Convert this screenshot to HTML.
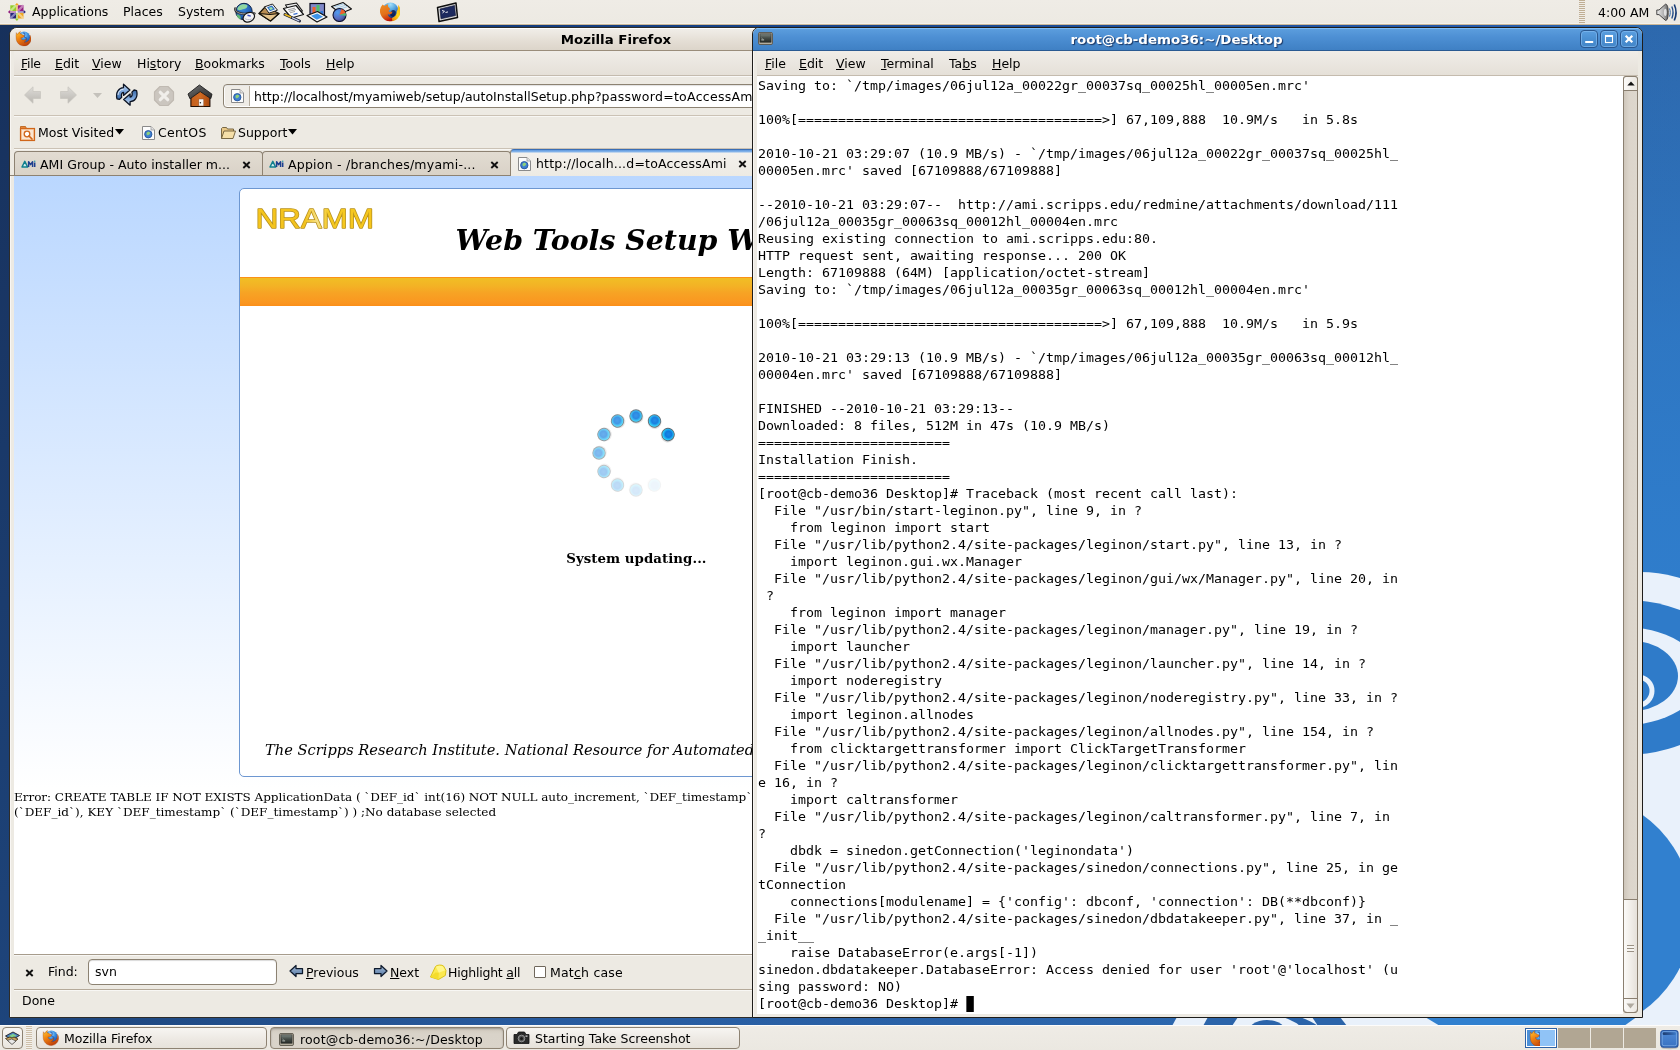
<!DOCTYPE html>
<html lang="en">
<head>
<meta charset="utf-8">
<title>Desktop</title>
<style>
html,body{margin:0;padding:0;}
body{width:1680px;height:1050px;overflow:hidden;position:relative;background:#1b3c70;font-family:"DejaVu Sans","Liberation Sans",sans-serif;font-size:12.5px;color:#000;}
.abs{position:absolute;}
u{text-decoration:underline;text-underline-offset:0.5px;text-decoration-thickness:1px;}
#wall{left:0;top:0;width:1680px;height:1050px;}
/* panels */
#toppanel{left:0;top:0;width:1680px;height:24px;background:linear-gradient(#efece6 0,#edeae3 22px,#edeae3 23px,#f4f1ec 23px,#f4f1ec 24px);border-bottom:1px solid #cbb898;}
#botpanel{left:0;top:1025px;width:1680px;height:25px;background:linear-gradient(#efece6,#ebe8e1);}
.ptxt{position:absolute;top:5px;white-space:nowrap;line-height:15px;}
/* windows */
.win{position:absolute;box-sizing:border-box;background:#edeae3;}
.menubar{position:absolute;left:0;right:0;white-space:nowrap;}
.menubar span{position:absolute;top:0;line-height:15px;}
/* terminal */
#termtext{position:absolute;left:758px;top:77px;margin:0;font-family:"DejaVu Sans Mono","Liberation Mono",monospace;font-size:12.5px;line-height:17px;white-space:pre;color:#000;transform:scaleX(1.06304);transform-origin:0 0;}
</style>
<style>
.tab{box-sizing:border-box;border:1px solid #8d8272;border-bottom:none;border-radius:4px 4px 0 0;background:linear-gradient(#e2dcd2,#d9d2c7);}
.tabt{line-height:16px;white-space:nowrap;}
.tabx{font-weight:bold;font-size:13px;line-height:16px;}
</style>
<style>
.tbtn{width:18px;height:18px;box-sizing:border-box;border:1px solid #2a578f;border-radius:4px;background:linear-gradient(#5b9fe0,#4a8fd2 50%,#4486c8);box-shadow:inset 0 0 0 1px rgba(140,195,245,.55);}
.tbtn svg{position:absolute;left:-1px;top:-1px;}
</style>
<style>
.task{top:2px;width:232px;height:22px;box-sizing:border-box;border:1px solid #8d8272;border-radius:4px;background:linear-gradient(#f7f5f2,#ece8e2 60%,#e6e2da);}
</style>
<style>
.ptxt,.menubar span,.tabt,.ut{font-size:12px;transform:scaleX(1.0417);transform-origin:0 50%;}
</style>
</head>
<body>
<div id="root" style="position:absolute;left:0;top:0;width:1680px;height:1050px;overflow:hidden;will-change:transform;">
<svg id="wall" class="abs" width="1680" height="1050" viewBox="0 0 1680 1050">
<defs>
<linearGradient id="wg" x1="0" y1="0" x2="1" y2="0">
<stop offset="0" stop-color="#17315c"/><stop offset="0.45" stop-color="#1f4d8d"/><stop offset="0.8" stop-color="#2a65aa"/><stop offset="1" stop-color="#2d69ae"/>
</linearGradient>
<linearGradient id="wv" x1="0" y1="0" x2="0" y2="1">
<stop offset="0.03" stop-color="#2f7dcc" stop-opacity="0"/><stop offset="0.18" stop-color="#2f7dcc" stop-opacity="0.3"/><stop offset="0.32" stop-color="#2f7dcc" stop-opacity="0.7"/><stop offset="0.5" stop-color="#2f7dcc" stop-opacity="0.95"/><stop offset="1" stop-color="#3383d3" stop-opacity="1"/>
</linearGradient>
<linearGradient id="wl" x1="0" y1="0" x2="0" y2="1">
<stop offset="0" stop-color="#17305b"/><stop offset="1" stop-color="#1e457c"/>
</linearGradient>
<linearGradient id="wt" x1="0" y1="0" x2="1" y2="0"><stop offset="0" stop-color="#16315d"/><stop offset="0.286" stop-color="#133b7b"/><stop offset="0.65" stop-color="#1c4c95"/><stop offset="0.893" stop-color="#2458a8"/><stop offset="1" stop-color="#2d69ae"/></linearGradient>
<linearGradient id="wb" x1="0" y1="0" x2="1" y2="0"><stop offset="0" stop-color="#1d447a"/><stop offset="0.357" stop-color="#275a9e"/><stop offset="0.673" stop-color="#2a62a8"/><stop offset="1" stop-color="#2e6cb4"/></linearGradient>
</defs>
<rect width="1680" height="1050" fill="url(#wg)"/>
<rect x="1400" width="280" height="1050" fill="url(#wv)"/>
<rect x="0" width="12" height="1050" fill="url(#wl)"/>
<rect x="12" y="20" width="1630" height="10" fill="url(#wt)"/>
<rect x="12" y="1012" width="1400" height="16" fill="url(#wb)"/>
<!-- swirl -->
<ellipse cx="1640" cy="830" rx="186" ry="258" fill="#e9f1fb"/>
<ellipse cx="1625" cy="677.5" rx="112" ry="77.5" fill="#2f7bc9"/>
<ellipse cx="1620" cy="676" rx="82.6" ry="49.5" fill="#e9f1fb"/>
<ellipse cx="1630" cy="676" rx="48" ry="35.5" fill="#2f7bc9"/>
<circle cx="1638" cy="691" r="14" fill="none" stroke="#e9f1fb" stroke-width="5"/>
<ellipse cx="1578" cy="913" rx="114.7" ry="118.9" fill="#3180cf"/>
<path d="M1422 1016L1638 1016L1624 1026L1435 1026z" fill="#3180cf"/>
<!-- bottom strip swirls -->
<g>
<path d="M1177 1017 L1172 1026 L1440 1026 L1425 1017 Z" fill="#e9f1fb"/>
<path d="M1208 1017 L1203 1026 L1232 1026 L1238 1017 Z" fill="#2b64aa"/>
<ellipse cx="1267" cy="1034" rx="20" ry="14" fill="#2b64aa"/>
<path d="M1283 1017 L1300 1017 C1308 1020 1314 1023 1318 1026 L1300 1026 C1296 1022 1290 1020 1283 1017 Z" fill="#2b64aa"/>
<path d="M1312 1017 L1340 1017 L1347 1026 L1318 1026 Z" fill="#2b64aa"/>
</g>
</svg>
<svg width="0" height="0" style="position:absolute">
<defs>
<radialGradient id="ffglobe" cx="0.5" cy="0.12" r="0.95"><stop offset="0" stop-color="#a4e0fa"/><stop offset="0.35" stop-color="#5aa8e0"/><stop offset="0.65" stop-color="#2f66b8"/><stop offset="1" stop-color="#071a55"/></radialGradient>
<linearGradient id="fffox" x1="0.3" y1="0" x2="0.6" y2="1"><stop offset="0" stop-color="#ee8a22"/><stop offset="0.55" stop-color="#e2701a"/><stop offset="0.85" stop-color="#cf3a0e"/><stop offset="1" stop-color="#b81408"/></linearGradient>
<linearGradient id="fftail" x1="0" y1="1" x2="1" y2="0.2"><stop offset="0" stop-color="#dc5a0c"/><stop offset="0.35" stop-color="#f0a010"/><stop offset="0.65" stop-color="#ffd81c"/><stop offset="1" stop-color="#f6b414"/></linearGradient>
<symbol id="firefox" viewBox="0 0 20 20">
<circle cx="10.2" cy="9.2" r="7.7" fill="url(#ffglobe)"/>
<ellipse cx="12.6" cy="12" rx="2.6" ry="3.3" transform="rotate(25 12.6 12)" fill="#050f40" opacity="0.75"/>
<path d="M8.5 19.7A9.8 9.8 0 0 0 17.6 3.6C18 6.2 17.3 8.6 16.3 10.2 16.7 13.8 13.5 17 9.5 16.8z" fill="url(#fftail)"/>
<path d="M2.6 3.4C3.4 4.3 4.4 4.8 5.3 4.7 6 3.9 7 3.4 8 3.5 7.6 4.4 7.7 5.2 8.2 5.9L9.6 7.2C10 7.8 9.8 8.4 9.2 8.7L8.3 9.2 9.2 9.9 8.2 10.5C9.3 10.9 10.6 10.8 11.8 10.3 12.2 11 12 11.9 11.3 12.5 10.2 13.3 8.6 13.3 7.5 12.6 7.8 14.6 9.4 16.3 11.6 16.6L12 19.5A9.8 9.8 0 0 1 2.6 3.4z" fill="url(#fffox)"/>
</symbol>
<radialGradient id="ffglobe3" cx="0.45" cy="0.3" r="0.75"><stop offset="0" stop-color="#b4e2ff"/><stop offset="0.45" stop-color="#3f96e4"/><stop offset="1" stop-color="#173f9c"/></radialGradient>
<linearGradient id="fffox3" x1="0.1" y1="0" x2="0.7" y2="1"><stop offset="0" stop-color="#ffc42e"/><stop offset="0.4" stop-color="#f08412"/><stop offset="1" stop-color="#b93a0a"/></linearGradient>
<symbol id="ffx3" viewBox="0 0 20 20">
<circle cx="11" cy="9" r="7.3" fill="url(#ffglobe3)"/>
<path d="M9.5 3.5c1.5 0 2.5 1 2.5 2.2s-1 1.8-.5 2.8 2 .5 2.5 1.5-.5 2.5-2 2.5" fill="none" stroke="#2359b5" stroke-width="1.3" opacity="0.8"/>
<path d="M1.6 3.2c.4 1 .9 1.6 1.7 2C3.8 3.7 5 2.5 6.6 1.9 6 2.9 5.9 3.8 6.2 4.7c1.2-.1 2.3.5 3 1.5l1.7.3c.5.3.5.9.2 1.3L9.7 9.1C9 9.6 8 9.7 7.2 9.3c0 1.2.8 2.3 2 2.7 1.7.6 3.5-.1 4.5-1.6.1 2-1 3.7-2.7 4.5 2.7.3 5.2-1.1 6.5-3.4.9-1.6 1.1-3.5.6-5.2 1.1 1.5 1.6 3.4 1.4 5.3-.5 4.5-4.4 7.9-8.9 7.8-4.7-.1-8.6-3.7-9.1-8.4-.3-2.7-.3-5.2.100-7.8z" fill="url(#fffox3)" stroke="#9c3606" stroke-width="0.4" stroke-linejoin="round"/>
</symbol>
<linearGradient id="termscr" x1="0" y1="0" x2="0" y2="1"><stop offset="0" stop-color="#7c8680"/><stop offset="0.5" stop-color="#454c47"/><stop offset="1" stop-color="#262b28"/></linearGradient>
<symbol id="termicon" viewBox="0 0 16 14">
<rect x="0.5" y="0.5" width="15" height="13" rx="1.5" fill="#b4ae9f" stroke="#5a554b"/>
<rect x="2" y="2" width="12" height="9" fill="url(#termscr)" stroke="#2a2a26" stroke-width="0.6"/>
<path d="M3.5 8.5h3" stroke="#d8ddd8" stroke-width="0.9"/>
<path d="M3.5 6.3l1.6 1" stroke="#aab0aa" stroke-width="0.6" fill="none"/>
</symbol>
</defs>
</svg>

<div id="toppanel" class="abs">
<!-- CentOS logo -->
<svg class="abs" style="left:7px;top:2px" width="20" height="20" viewBox="0 0 20 20">
<g transform="translate(9.9 9.9)">
<rect x="-6.6" y="-6.6" width="5.8" height="5.8" fill="#92cc2a"/><rect x="0.8" y="-6.6" width="5.8" height="5.8" fill="#931f80"/><rect x="0.8" y="0.8" width="5.8" height="5.8" fill="#efa520"/><rect x="-6.6" y="0.8" width="5.8" height="5.8" fill="#26247a"/>
<path d="M-6.6 -0.8L-0.8 -6.6" stroke="#d2ee9c" stroke-width="2.2" opacity="0.8"/><path d="M0.8 -0.8L6.6 -6.6" stroke="#cf90c4" stroke-width="2.2" opacity="0.85"/><path d="M0.8 0.8L6.6 6.6" stroke="#f8d898" stroke-width="2.2" opacity="0.85"/><path d="M-6.6 6.6L-0.8 0.8" stroke="#9a98c8" stroke-width="2.2" opacity="0.85"/>
<path d="M0 -7V0" stroke="#f3bf5e" stroke-width="1.3"/><path d="M7 0H0" stroke="#8a7cc0" stroke-width="1.3"/><path d="M0 7V0" stroke="#b4dc6a" stroke-width="1.3"/><path d="M-7 0H0" stroke="#c47ab8" stroke-width="1.3"/>
<path d="M-1.9 -6.8L0 -9 1.9 -6.8z" fill="#efa520"/><path d="M6.8 -1.9L9 0 6.8 1.9z" fill="#26247a"/><path d="M-1.9 6.8L0 9 1.9 6.8z" fill="#92cc2a"/><path d="M-6.8 -1.9L-9 0 -6.8 1.9z" fill="#931f80"/>
<circle r="1" fill="#fff" opacity="0.9"/>
</g>
</svg>
<span class="ptxt" style="left:32px">Applications</span>
<span class="ptxt" style="left:122.5px">Places</span>
<span class="ptxt" style="left:178px">System</span>
<!-- launcher: web browser globe + mouse -->
<svg class="abs" style="left:234px;top:2px" width="22" height="21" viewBox="0 0 22 21">
<defs><radialGradient id="glb" cx="0.4" cy="0.3" r="0.8"><stop offset="0" stop-color="#3f8fe0"/><stop offset="1" stop-color="#0f3f96"/></radialGradient></defs>
<circle cx="10" cy="9.5" r="8.2" fill="url(#glb)" stroke="#0a1f45" stroke-width="1"/>
<path d="M5 4.2c2-2 5.5-2.5 8-1.2 1.2 1.5-.5 3.5-3 4S6.5 8.5 4.5 8 3.5 5.5 5 4.2z" fill="#8fd6a0"/>
<path d="M2.5 12.5c1.5-.3 3 .3 3.8 1.5s.5 2.8-.3 3.5C4 16.5 3 14.8 2.5 12.5z" fill="#5fb574"/>
<path d="M1.2 6.5C0.5 9.5 5 12 11 11.8s8.5-1.3 9.5-.3" fill="none" stroke="#2b2b2b" stroke-width="2.3" stroke-linecap="round"/>
<path d="M1.2 6.5C0.5 9.5 5 12 11 11.8s8.5-1.3 9.5-.3" fill="none" stroke="#a8a8a8" stroke-width="0.9" stroke-linecap="round"/>
<ellipse cx="14.8" cy="15.3" rx="6" ry="4.5" transform="rotate(-28 14.8 15.3)" fill="#f4f4f6" stroke="#161616" stroke-width="1.2"/>
<path d="M13.5 13.3l3.3 .800" stroke="#3d4fc0" stroke-width="1.4"/>
<path d="M10.5 16c1.5 1.8 4.5 2.3 7 1" fill="none" stroke="#b9b9c4" stroke-width="1"/>
</svg>
<!-- launcher: email -->
<svg class="abs" style="left:258px;top:2px" width="22" height="20" viewBox="0 0 22 20">
<path d="M1 11.5L7.5 4.5l13.5 7-8.5 7.5z" fill="#b98d52" stroke="#141008" stroke-width="1.2" stroke-linejoin="round"/>
<path d="M1 11.5l11 1L21 11.5l-8.5 7.5z" fill="#e6c48c" stroke="#141008" stroke-width="1.1" stroke-linejoin="round"/>
<path d="M6.5 4.8L14.5 2l5 6.2-8.5 3z" fill="#f6f6f2" stroke="#222" stroke-width="1"/>
<path d="M9 5.3l5-1.7 3 3.7-5 1.9z" fill="#2f6fc8"/>
<path d="M10.8 5.8l2.7-.9 1.6 2-2.7 1z" fill="#9fe0a8"/>
</svg>
<!-- launcher: word processor -->
<svg class="abs" style="left:282px;top:2px" width="23" height="21" viewBox="0 0 23 21">
<path d="M3.5 3l11-2 6 8-11 3z" fill="#ececec" stroke="#141414" stroke-width="1.1" stroke-linejoin="round"/>
<path d="M1.5 6.5l12.5-3 7.5 9-12 3.5z" fill="#fcfcfc" stroke="#141414" stroke-width="1.2" stroke-linejoin="round"/>
<path d="M6 7.8l7-1.7M7 9.3l7-1.8M8 10.8l5-1.4" stroke="#9a9a9a" stroke-width="0.9"/>
<path d="M11.5 12.3l4-1" stroke="#3a6fd0" stroke-width="1.3"/>
<path d="M3 12.5l14.5 6.5" stroke="#141a30" stroke-width="3" stroke-linecap="round"/>
<path d="M3.2 12.5l5.5 2.5" stroke="#e8b820" stroke-width="1.7" stroke-linecap="round"/>
<path d="M10.5 15.8l6.5 3" stroke="#c4cdea" stroke-width="1.3" stroke-linecap="round"/>
</svg>
<!-- launcher: presentation -->
<svg class="abs" style="left:306px;top:2px" width="22" height="21" viewBox="0 0 22 21">
<rect x="4" y="1.5" width="14.5" height="12" fill="#8088c8" stroke="#0c0c20" stroke-width="1.2"/>
<rect x="6.5" y="5" width="3" height="6" fill="#f0622a"/><rect x="10.5" y="3" width="3" height="8" fill="#4fbe6a"/><rect x="14.5" y="9" width="2.5" height="4" fill="#2f7ad8"/>
<path d="M1 13.5l10.5-4 9.5 5.5-10 5z" fill="#f6f6f6" stroke="#111" stroke-width="1.2" stroke-linejoin="round"/>
<path d="M5 13.8l6.3-2.4 5.7 3.3-6.2 3z" fill="#3d94ea"/>
</svg>
<!-- launcher: spreadsheet -->
<svg class="abs" style="left:330px;top:1px" width="23" height="21" viewBox="0 0 23 21">
<defs><radialGradient id="pieg" cx="0.35" cy="0.3" r="0.8"><stop offset="0" stop-color="#4f9cf0"/><stop offset="0.6" stop-color="#5a6cc0"/><stop offset="1" stop-color="#3a3f80"/></radialGradient></defs>
<path d="M1.5 5.5L13 1.5l8.5 6.5-11 4.5z" fill="#ececec" stroke="#111" stroke-width="1.1" stroke-linejoin="round"/>
<path d="M4.5 5.8l9-3M6.5 7.3l9-3.1M8.5 8.8l9-3.3" stroke="#8fc4e8" stroke-width="0.8"/>
<circle cx="9.5" cy="14" r="6.5" fill="url(#pieg)" stroke="#0e1230" stroke-width="1.1"/>
<path d="M9.5 14L11.5 7.9a6.5 6.5 0 0 1 4.2 4z" fill="#f0602a"/>
<path d="M9.5 14l6.2-2.1a6.5 6.5 0 0 1 .2 2.8z" fill="#4fbe6a"/>
</svg>
<!-- firefox launcher -->
<svg class="abs" style="left:379.5px;top:1.3px" width="20.5" height="20.5"><use href="#firefox" width="20.5" height="20.5"/></svg>
<!-- terminal launcher -->
<svg class="abs" style="left:436px;top:1px" width="23" height="22" viewBox="0 0 23 22">
<path d="M1.5 6.5L20 2l1.5 14.5-18.5 4z" fill="#dcdcdc" stroke="#0e0e0e" stroke-width="1.5" stroke-linejoin="round"/>
<path d="M4 8L18.5 4.5l1 10-14.5 3.3z" fill="#1d2a5e" stroke="#0c1030" stroke-width="0.6"/>
<path d="M6 9.5l2.5.8-2 1.7" fill="none" stroke="#fff" stroke-width="0.9"/><path d="M9.5 11.5l2.5-.6" stroke="#fff" stroke-width="0.9"/>
</svg>
<!-- handle -->
<div class="abs" style="left:1579px;top:0;width:6px;height:24px;background:repeating-linear-gradient(#bfae94 0,#bfae94 1px,#f0ede7 1px,#f0ede7 2px);"></div>
<span class="ptxt" style="left:1598px;top:6px">4:00 AM</span>
<!-- speaker -->
<svg class="abs" style="left:1656px;top:3px" width="23" height="19" viewBox="0 0 23 19">
<defs><linearGradient id="spk" x1="0" y1="0" x2="1" y2="0"><stop offset="0" stop-color="#f0f0f0"/><stop offset="0.6" stop-color="#b0b0b0"/><stop offset="1" stop-color="#5a5a5a"/></linearGradient></defs>
<path d="M0.8 7H3L9.5 1.2C11.5 1 12.2 5 12.2 9.3 12.2 13.6 11.5 17.6 9.5 17.4L3 11.6H0.8z" fill="url(#spk)" stroke="#333" stroke-width="0.9" stroke-linejoin="round"/>
<ellipse cx="9.3" cy="9.3" rx="1.4" ry="3.6" fill="#ededed" opacity="0.85"/>
<path d="M13.5 5.5c1 2.5 1 5.5 0 8" fill="none" stroke="#3465a4" stroke-width="1"/>
<path d="M15.8 3.5c1.6 3.8 1.6 8.2 0 12" fill="none" stroke="#204a87" stroke-width="1.3"/>
<path d="M18.3 1.5c2.2 5 2.2 11 0 16" fill="none" stroke="#173a74" stroke-width="1.6"/>
</svg>
</div>

<div id="ff" class="abs" style="left:9px;top:27px;width:1216px;height:991px;box-sizing:border-box;border:1px solid #2e2c28;border-radius:8px 8px 0 0;background:#edeae3;overflow:hidden;"></div>
<!-- title bar -->
<div class="abs" style="left:10px;top:28px;width:1214px;height:22px;border-radius:7px 7px 0 0;background:linear-gradient(#f1eee9 0,#ece8e1 25%,#e5dfd6 55%,#e0d9cf 80%,#dcd5ca 100%);border-bottom:1px solid #9a8d7b;"></div>
<div class="abs" style="left:16px;top:28px;width:1202px;height:1px;background:#fff;"></div>
<svg class="abs" style="left:14.5px;top:30.3px" width="16.5" height="16.5"><use href="#ffx3" width="16.5" height="16.5"/></svg>
<div class="abs" style="left:10px;top:31.5px;width:1212px;text-align:center;font-weight:bold;font-size:12px;line-height:16px;color:#000;transform:scaleX(1.111);">Mozilla Firefox</div>
<!-- menubar -->
<div class="abs" style="left:10px;top:51px;width:1px;height:966px;background:#f8f6f3;"></div><div class="abs" style="left:14px;top:51px;width:1210px;height:24px;background:linear-gradient(#f0ede8,#e5e0d8);border-bottom:1px solid #c4bbae;"></div>
<div class="abs" style="left:14px;top:76px;width:1210px;height:1px;background:#f9f8f6;"></div>
<div class="menubar" style="top:57px;left:0;height:15px">
<span style="left:21px;letter-spacing:-0.3px"><u>F</u>ile</span><span style="left:55px"><u>E</u>dit</span><span style="left:92px"><u>V</u>iew</span><span style="left:137px">Hi<u>s</u>tory</span><span style="left:195px"><u>B</u>ookmarks</span><span style="left:280px"><u>T</u>ools</span><span style="left:326px"><u>H</u>elp</span>
</div>
<!-- nav toolbar -->
<div class="abs" style="left:14px;top:115px;width:1210px;height:1px;background:#cbc2b5;"></div>
<div class="abs" style="left:14px;top:116px;width:1210px;height:1px;background:#f8f7f4;"></div>
<!-- back -->
<svg class="abs" style="left:23px;top:85px" width="20" height="20" viewBox="0 0 20 20"><defs><linearGradient id="garr" x1="0" y1="0" x2="0" y2="1"><stop offset="0" stop-color="#dedcd8"/><stop offset="1" stop-color="#b9b6b0"/></linearGradient></defs><path d="M1.5 10L10 1.8V6.5H17.5V13.5H10V18.2z" fill="url(#garr)" stroke="#c9c6c0" stroke-width="0.8"/></svg>
<!-- forward -->
<svg class="abs" style="left:58px;top:85px" width="20" height="20" viewBox="0 0 20 20"><path d="M18.5 10L10 1.8V6.5H2.5V13.5H10V18.2z" fill="url(#garr)" stroke="#c9c6c0" stroke-width="0.8"/></svg>
<svg class="abs" style="left:92px;top:92px" width="11" height="7" viewBox="0 0 11 7"><path d="M1 1h9L5.5 6z" fill="#c4c1bb"/></svg>
<!-- reload -->
<svg class="abs" style="left:115px;top:83px" width="24" height="24" viewBox="0 0 24 24">
<defs><linearGradient id="grel" x1="0" y1="0" x2="0" y2="1"><stop offset="0" stop-color="#c9dcf4"/><stop offset="0.45" stop-color="#7fa8dc"/><stop offset="1" stop-color="#3465a4"/></linearGradient>
<path id="rarr" d="M2 15.8C0.3 9 4 4.9 8.5 4.7V1.2L14.9 7 8.5 12.4V9.3C6.6 9.5 5.9 11.6 6.7 14.3L4.5 16.4z"/></defs>
<use href="#rarr" fill="url(#grel)" stroke="#0c1424" stroke-width="1.3" stroke-linejoin="round"/>
<use href="#rarr" transform="rotate(180 11.8 11.7)" fill="url(#grel)" stroke="#0c1424" stroke-width="1.3" stroke-linejoin="round"/>
<path d="M3 12C3 8.5 5.5 6.3 8.5 6.2" fill="none" stroke="#fff" stroke-width="1" opacity="0.7"/>
</svg>
<!-- stop (disabled) -->
<svg class="abs" style="left:153px;top:85px" width="22" height="22" viewBox="0 0 22 22"><path d="M7 1.5h8L20.5 7v8L15 20.5H7L1.5 15V7z" fill="#cbc6bf" stroke="#c0bab2" stroke-width="1.2" stroke-linejoin="round"/><path d="M7.3 7.3l7.4 7.4M14.7 7.3l-7.4 7.4" stroke="#f0eeea" stroke-width="3.2" stroke-linecap="round"/></svg>
<!-- home -->
<svg class="abs" style="left:187px;top:84px" width="26" height="24" viewBox="0 0 26 24">
<defs><linearGradient id="ghome" x1="0" y1="0" x2="1" y2="0"><stop offset="0" stop-color="#c4601e"/><stop offset="0.5" stop-color="#cf6a22"/><stop offset="1" stop-color="#a8480f"/></linearGradient>
<linearGradient id="groof" x1="0" y1="0" x2="1" y2="1"><stop offset="0" stop-color="#7a7a7a"/><stop offset="0.5" stop-color="#4a4a4a"/><stop offset="1" stop-color="#2e2e2e"/></linearGradient></defs>
<path d="M3.9 22.5V12L13 6l9.9 6V22.5z" fill="url(#ghome)" stroke="#1e0d03" stroke-width="1.1" stroke-linejoin="round"/>
<path d="M1 10L12.4 1 25 10.2 23.8 14.6 13.2 7.6 3 14.8z" fill="url(#groof)" stroke="#1c1c1c" stroke-width="0.9" stroke-linejoin="round"/>
<rect x="11.8" y="15" width="5" height="7" fill="#f6f6f6" stroke="#8a4a20" stroke-width="0.5"/>
<circle cx="13.4" cy="18.7" r="0.75" fill="#222"/>
</svg>
<!-- url bar -->
<div class="abs" style="left:223px;top:84px;width:900px;height:24px;box-sizing:border-box;border:1px solid #8c8272;border-radius:4px;background:#fff;box-shadow:inset 0 1px 1px rgba(0,0,0,.12);"></div>
<div class="abs" style="left:225px;top:86px;width:24px;height:20px;background:#efece6;border-right:1px solid #b5ac9e;border-radius:2px 0 0 2px"></div>
<svg class="abs pgicon" style="left:230px;top:88px" width="15" height="16" viewBox="0 0 15 16"><path d="M1.5 1.5h8.5l3.5 3.5v9.5H1.5z" fill="#fdfdfd" stroke="#8a8a8a" stroke-width="1"/><path d="M10 1.5v3.5h3.5" fill="#e4e4e4" stroke="#9a9a9a" stroke-width="0.8"/><circle cx="7.3" cy="9.2" r="3.7" fill="#3f7fd0" stroke="#1d4c96" stroke-width="0.8"/><path d="M5.5 8c1-1.5 3-1.5 3.5-.5s-.5 2-1.5 2.5-2 .5-2-2z" fill="#8ed07a"/></svg>
<div class="abs ut" style="left:254px;top:89px;line-height:16px;white-space:nowrap;letter-spacing:0.005px">http://localhost/myamiweb/setup/autoInstallSetup.php?<span style="letter-spacing:0.27px">password=toAccessAmi</span></div>
<!-- bookmarks toolbar -->
<div class="abs" style="left:14px;top:148px;width:1210px;height:1px;background:#cbc2b5;"></div>
<div class="abs" style="left:14px;top:149px;width:1210px;height:1px;background:#f8f7f4;"></div>
<svg class="abs" style="left:19px;top:125px" width="17" height="17" viewBox="0 0 17 17"><path d="M1.5 3.5V1.5h5l1 2z" fill="#e88a3c" stroke="#b85a10" stroke-width="0.8"/><rect x="1.5" y="3.5" width="14" height="12" fill="#f6c9a0" stroke="#d0661a" stroke-width="1.2"/><rect x="3" y="5" width="11" height="9" fill="#fbe6d2"/><circle cx="8" cy="9" r="2.8" fill="#fff" stroke="#d0661a" stroke-width="1.3"/><path d="M10 11l3 3" stroke="#d0661a" stroke-width="1.7" stroke-linecap="round"/></svg>
<div class="abs ut" style="left:38px;top:124.5px;line-height:16px;white-space:nowrap;">Most Visited</div>
<svg class="abs" style="left:115px;top:129px" width="9" height="6" viewBox="0 0 9 6"><path d="M0 0h9L4.5 5.5z" fill="#000"/></svg>
<svg class="abs" style="left:141px;top:125px" width="15" height="16" viewBox="0 0 15 16"><path d="M1.5 1.5h8.5l3.5 3.5v9.5H1.5z" fill="#fdfdfd" stroke="#8a8a8a" stroke-width="1"/><path d="M10 1.5v3.5h3.5" fill="#e4e4e4" stroke="#9a9a9a" stroke-width="0.8"/><circle cx="7.3" cy="9.2" r="3.7" fill="#3f7fd0" stroke="#1d4c96" stroke-width="0.8"/><path d="M5.5 8c1-1.5 3-1.5 3.5-.5s-.5 2-1.5 2.5-2 .5-2-2z" fill="#8ed07a"/></svg>
<div class="abs ut" style="left:158px;top:124.5px;line-height:16px;white-space:nowrap;letter-spacing:0.25px">CentOS</div>
<svg class="abs" style="left:220px;top:126px" width="16" height="14" viewBox="0 0 16 14"><path d="M1.5 12.5V2.5l1-1h4l1 1.5h6v2" fill="#e8c887" stroke="#6b5a36" stroke-width="0.9"/><path d="M1.5 12.5L4 5h11.5L13 12.5z" fill="#f5dfa8" stroke="#6b5a36" stroke-width="0.9" stroke-linejoin="round"/></svg>
<div class="abs ut" style="left:237.5px;top:124.5px;line-height:16px;white-space:nowrap;">Support</div>
<svg class="abs" style="left:288px;top:129px" width="9" height="6" viewBox="0 0 9 6"><path d="M0 0h9L4.5 5.5z" fill="#000"/></svg>
<!-- tab strip -->
<div class="abs" style="left:10px;top:150px;width:1214px;height:25px;background:#edeae3;border-bottom:1px solid #8d8272;"></div>
<div class="tab abs" style="left:14px;top:151px;width:249px;height:24px;"></div>
<div class="tab abs" style="left:262px;top:151px;width:249px;height:24px;"></div>
<div class="abs" style="left:510px;top:149px;width:249px;height:27px;box-sizing:border-box;border:1px solid #8d8272;border-top:1px solid #3a6db3;border-bottom:none;border-radius:4px 4px 0 0;background:linear-gradient(#5d97dd 0,#8bb8ec 2px,#f3f1ed 3px,#edeae3 100%);"></div>
<svg class="abs amifav" style="left:20.5px;top:159.5px" width="15" height="8" viewBox="0 0 15 8"><path d="M1 7L3.8 1.3 6.6 7z" fill="#cfeef0" stroke="#12808f" stroke-width="1.5" stroke-linejoin="round"/><path d="M7.6 7V1.8L9.6 4.6 11.6 1.8V7" fill="none" stroke="#1d3f8f" stroke-width="1.5" stroke-linejoin="round"/><path d="M13.7 2.5V7" stroke="#1d3f8f" stroke-width="1.5"/><circle cx="13.7" cy="1.2" r="0.8" fill="#2aa0a8"/></svg>
<div class="abs tabt" style="left:40px;top:157px;letter-spacing:0.04px">AMI Group - Auto installer m...</div>
<svg class="abs" style="left:241.5px;top:160.5px" width="9" height="8" viewBox="0 0 9 8"><path d="M1.3 1l6.4 6M7.7 1l-6.4 6" stroke="#111" stroke-width="1.9"/></svg>
<svg class="abs amifav" style="left:268.5px;top:159.5px" width="15" height="8" viewBox="0 0 15 8"><path d="M1 7L3.8 1.3 6.6 7z" fill="#cfeef0" stroke="#12808f" stroke-width="1.5" stroke-linejoin="round"/><path d="M7.6 7V1.8L9.6 4.6 11.6 1.8V7" fill="none" stroke="#1d3f8f" stroke-width="1.5" stroke-linejoin="round"/><path d="M13.7 2.5V7" stroke="#1d3f8f" stroke-width="1.5"/><circle cx="13.7" cy="1.2" r="0.8" fill="#2aa0a8"/></svg>
<div class="abs tabt" style="left:288px;top:157px;letter-spacing:0.22px">Appion - /branches/myami-...</div>
<svg class="abs" style="left:489.5px;top:160.5px" width="9" height="8" viewBox="0 0 9 8"><path d="M1.3 1l6.4 6M7.7 1l-6.4 6" stroke="#111" stroke-width="1.9"/></svg>
<svg class="abs pgicon" style="left:517px;top:156px" width="15" height="16" viewBox="0 0 15 16"><path d="M1.5 1.5h8.5l3.5 3.5v9.5H1.5z" fill="#fdfdfd" stroke="#8a8a8a" stroke-width="1"/><path d="M10 1.5v3.5h3.5" fill="#e4e4e4" stroke="#9a9a9a" stroke-width="0.8"/><circle cx="7.3" cy="9.2" r="3.7" fill="#3f7fd0" stroke="#1d4c96" stroke-width="0.8"/><path d="M5.5 8c1-1.5 3-1.5 3.5-.5s-.5 2-1.5 2.5-2 .5-2-2z" fill="#8ed07a"/></svg>
<div class="abs tabt" style="left:536px;top:156px;letter-spacing:0.18px">http://localh...d=toAccessAmi</div>
<svg class="abs" style="left:737.5px;top:159.5px" width="9" height="8" viewBox="0 0 9 8"><path d="M1.3 1l6.4 6M7.7 1l-6.4 6" stroke="#111" stroke-width="1.9"/></svg>
<!-- content area -->
<div class="abs" style="left:14px;top:176px;width:1206px;height:778px;background:linear-gradient(#bad7ff 0,#ffffff 612px,#ffffff 100%);overflow:hidden;">
 <div class="abs" style="left:225px;top:12px;width:792px;height:589px;box-sizing:border-box;border:1px solid #6d97d1;border-radius:5px;background:#fff;overflow:hidden;">
  <svg class="abs" style="left:12px;top:14px" width="130" height="30" viewBox="0 0 130 30"><defs><linearGradient id="gold" x1="0" y1="0" x2="1" y2="0"><stop offset="0" stop-color="#f6c61c"/><stop offset="0.42" stop-color="#f3c21e"/><stop offset="0.52" stop-color="#f7e184"/><stop offset="0.62" stop-color="#f5c920"/><stop offset="1" stop-color="#f6c61c"/></linearGradient></defs>
  <g transform="translate(3.7 24.7) scale(1.099 1)" font-family="Liberation Sans, sans-serif" font-size="28.3" letter-spacing="0.15"><text x="0" y="0" fill="url(#gold)" stroke="#b8921f" stroke-width="1.5" stroke-linejoin="round" paint-order="stroke">NRAMM</text></g></svg>
  <div class="abs" style="left:215.5px;top:32.5px;font-family:'DejaVu Serif','Liberation Serif',serif;font-style:italic;font-weight:bold;font-size:28.4px;line-height:36px;white-space:nowrap;">Web Tools Setup Wizard</div>
  <div class="abs" style="left:0;top:88px;width:100%;height:29px;background:linear-gradient(#fb9118 0,#fb9118 1px,#f1bd25 1.5px,#f3b325 30%,#f7a324 55%,#fa9620 90%,#fb8f18 100%);"></div>
  <!-- spinner -->
  <svg class="abs" style="left:346px;top:214px" width="100" height="100" viewBox="-50 -50 100 100">
  <defs>
  <radialGradient id="dot" cx="0.5" cy="0.45" r="0.55"><stop offset="0" stop-color="#1c86e6"/><stop offset="0.5" stop-color="#0f7ade"/><stop offset="0.78" stop-color="#1fb6f4"/><stop offset="1" stop-color="#38dcff"/></radialGradient>
  <g id="sd"><circle cx="0.6" cy="0.9" r="6.9" fill="#000" opacity="0.12"/><circle r="6.7" fill="#5f6870"/><circle r="5.8" fill="url(#dot)"/></g>
  </defs>
  <use href="#sd" transform="rotate(60) translate(0 -37)" opacity="1"/>
  <use href="#sd" transform="rotate(30) translate(0 -37)" opacity="0.95"/>
  <use href="#sd" transform="rotate(0) translate(0 -37)" opacity="0.88"/>
  <use href="#sd" transform="rotate(-30) translate(0 -37)" opacity="0.78"/>
  <use href="#sd" transform="rotate(-60) translate(0 -37)" opacity="0.66"/>
  <use href="#sd" transform="rotate(-90) translate(0 -37)" opacity="0.54"/>
  <use href="#sd" transform="rotate(-120) translate(0 -37)" opacity="0.4"/>
  <use href="#sd" transform="rotate(-150) translate(0 -37)" opacity="0.28"/>
  <use href="#sd" transform="rotate(180) translate(0 -37)" opacity="0.17"/>
  <use href="#sd" transform="rotate(150) translate(0 -37)" opacity="0.07"/>
  </svg>
  <div class="abs" style="left:1.4px;top:360px;width:100%;text-align:center;letter-spacing:0.05px;font-family:'DejaVu Serif','Liberation Serif',serif;font-weight:bold;font-size:13.33px;line-height:18px;">System updating...</div>
  <div class="abs" style="left:25px;top:551px;font-family:'DejaVu Serif','Liberation Serif',serif;font-style:italic;font-size:14.65px;line-height:20px;white-space:nowrap;">The Scripps Research Institute. National Resource for Automated Molecular Microscopy</div>
 </div>
 <div class="abs" style="left:0px;top:614px;font-family:'DejaVu Serif','Liberation Serif',serif;font-size:11.1px;line-height:15px;white-space:nowrap;transform:scaleX(1.084);transform-origin:0 0;"><span style="letter-spacing:-0.035px">Error: CREATE TABLE IF NOT EXISTS ApplicationData ( `DEF_id` int(16) NOT NULL auto_increment, `DEF_timestamp` timestamp NOT NULL, PRIMARY KEY</span><br>(`DEF_id`), KEY `DEF_timestamp` (`DEF_timestamp`) ) ;No database selected</div>
</div>
<!-- find bar -->
<div class="abs" style="left:14px;top:954px;width:1210px;height:1px;background:#a79c8c;"></div>
<div class="abs" style="left:14px;top:955px;width:1210px;height:1px;background:#f8f7f4;"></div>
<svg class="abs" style="left:25px;top:968.5px" width="9" height="8" viewBox="0 0 9 8"><path d="M1.3 1l6.4 6M7.7 1l-6.4 6" stroke="#111" stroke-width="1.9"/></svg>
<div class="abs ut" style="left:48px;top:964px;line-height:16px;">Find:</div>
<div class="abs" style="left:88px;top:959px;width:189px;height:26px;box-sizing:border-box;border:1px solid #8c8272;border-radius:4px;background:#fff;box-shadow:inset 0 1px 1px rgba(0,0,0,.15);"></div>
<div class="abs ut" style="left:95px;top:964px;line-height:16px;">svn</div>
<svg class="abs" style="left:289px;top:964px" width="15" height="14" viewBox="0 0 15 14"><defs><linearGradient id="gfarr" x1="0" y1="0" x2="0" y2="1"><stop offset="0" stop-color="#a9c0dc"/><stop offset="1" stop-color="#4f739f"/></linearGradient></defs><path d="M1 7L7 1.5V4.5H13.5V9.5H7V12.5z" fill="url(#gfarr)" stroke="#0e1a2c" stroke-width="1.25" stroke-linejoin="round"/></svg>
<div class="abs ut" style="left:306px;top:964.5px;line-height:16px;"><u>P</u>revious</div>
<svg class="abs" style="left:373px;top:964px" width="15" height="14" viewBox="0 0 15 14"><path d="M14 7L8 1.5V4.5H1.5V9.5H8V12.5z" fill="url(#gfarr)" stroke="#0e1a2c" stroke-width="1.25" stroke-linejoin="round"/></svg>
<div class="abs ut" style="left:390px;top:964.5px;line-height:16px;"><u>N</u>ext</div>
<svg class="abs" style="left:429px;top:963px" width="19" height="18" viewBox="0 0 19 18"><path d="M1.5 14L6.5 3.5C8 1.8 12.5 1.5 14.5 3L17 7.5 16.3 12.5 9.5 16.5z" fill="#fce94f" stroke="#d6bc10" stroke-width="0.9" stroke-linejoin="round"/><path d="M6.8 3.8C8.5 2.5 12 2.3 14 3.4L16.2 7.3 9.8 9.8z" fill="#fff68a"/><path d="M1.5 14L6.5 9.5 9.8 9.8 9.5 16.5z" fill="#f4dc2c"/></svg>
<div class="abs ut" style="left:448px;top:964.5px;line-height:16px;letter-spacing:-0.2px">Highlight <u>a</u>ll</div>
<div class="abs" style="left:534px;top:966px;width:12px;height:12px;box-sizing:border-box;border:1px solid #6f675b;background:#fff;border-radius:1px"></div>
<div class="abs ut" style="left:550px;top:964.5px;line-height:16px;letter-spacing:0.2px">Mat<u>c</u>h case</div>
<!-- status bar -->
<div class="abs" style="left:14px;top:989px;width:1210px;height:1px;background:#b4a999;"></div>
<div class="abs" style="left:14px;top:990px;width:1210px;height:1px;background:#f8f7f4;"></div>
<div class="abs ut" style="left:22px;top:993px;line-height:16px;">Done</div>


<div id="term" class="abs" style="left:752px;top:27px;width:891px;height:991px;box-sizing:border-box;border:1px solid #1f1d1a;border-radius:7px 7px 0 0;background:#edeae3;"></div>
<!-- title bar -->
<div class="abs" style="left:753px;top:28px;width:889px;height:22px;border-radius:6px 6px 0 0;background:linear-gradient(#6aaae8 0,#5a9cdc 8%,#4e90d4 40%,#4688cc 70%,#3f80c4 100%);border-bottom:1px solid #2a5a92;"></div>
<div class="abs" style="left:757px;top:28px;width:881px;height:1px;background:#7cbcf8;"></div>
<svg class="abs" style="left:758px;top:32px" width="15" height="13"><use href="#termicon" width="15" height="13"/></svg>
<div class="abs" style="left:774px;top:31.5px;width:805px;text-align:center;font-weight:bold;font-size:12px;line-height:16px;color:#fff;text-shadow:1px 1px 1px rgba(20,40,80,.85);white-space:nowrap;transform:scaleX(1.116);">root@cb-demo36:~/Desktop</div>
<!-- buttons -->
<div class="tbtn abs" style="left:1580px;top:30px;"><svg width="18" height="18" viewBox="0 0 18 18"><path d="M5.2 12h8" stroke="#fff" stroke-width="2"/></svg></div>
<div class="tbtn abs" style="left:1600px;top:30px;"><svg width="18" height="18" viewBox="0 0 18 18"><rect x="5.5" y="5.5" width="7" height="7" fill="none" stroke="#fff" stroke-width="1.1"/><path d="M5 6h8" stroke="#fff" stroke-width="2"/></svg></div>
<div class="tbtn abs" style="left:1620px;top:30px;"><svg width="18" height="18" viewBox="0 0 18 18"><path d="M5.7 5.7l6.6 6.6M12.3 5.7l-6.6 6.6" stroke="#fff" stroke-width="2.2"/></svg></div>
<!-- menubar -->
<div class="abs" style="left:753px;top:51px;width:1px;height:966px;background:#f8f6f3;"></div><div class="abs" style="left:757px;top:51px;width:881px;height:24px;background:linear-gradient(#f0ede8,#e5e0d8);border-bottom:1px solid #c4bbae;"></div>
<div class="menubar" style="top:57px;left:0;height:15px">
<span style="left:765px"><u>F</u>ile</span><span style="left:798.5px"><u>E</u>dit</span><span style="left:836px"><u>V</u>iew</span><span style="left:881px"><u>T</u>erminal</span><span style="left:949px">Ta<u>b</u>s</span><span style="left:992px"><u>H</u>elp</span>
</div>
<!-- text area -->
<div class="abs" style="left:757px;top:76px;width:866px;height:938px;background:#fff;"></div>
<!-- scrollbar -->
<div class="abs" style="left:1623px;top:76px;width:15px;height:937px;box-sizing:border-box;border:1px solid #8a7f70;border-radius:3px;background:linear-gradient(90deg,#cfc7bb,#dcd5cb 40%,#ddd7cd);"></div>
<div class="abs" style="left:1623px;top:76px;width:15px;height:15px;box-sizing:border-box;border:1px solid #8a7f70;border-radius:3px 3px 0 0;background:linear-gradient(90deg,#fbfaf8,#ebe7e1);"></div>
<svg class="abs" style="left:1626.5px;top:80.5px" width="8" height="5" viewBox="0 0 8 5"><path d="M0.3 4.5h7.4L4 0.5z" fill="#111"/></svg>
<div class="abs" style="left:1623px;top:899px;width:15px;height:100px;box-sizing:border-box;border:1px solid #8a7f70;background:linear-gradient(90deg,#fbfaf8,#f1eee9 50%,#e6e1da);"></div>
<div class="abs" style="left:1627px;top:945px;width:7px;height:7px;background:repeating-linear-gradient(#9a9184 0,#9a9184 1px,#f6f4f0 1px,#f6f4f0 3px);"></div>
<div class="abs" style="left:1623px;top:998px;width:15px;height:15px;box-sizing:border-box;border:1px solid #8a7f70;border-radius:0 0 4px 4px;background:linear-gradient(90deg,#fbfaf8,#ebe7e1);"></div>
<svg class="abs" style="left:1626px;top:1003px" width="9" height="6" viewBox="0 0 9 6"><path d="M0.5 0.5h8L4.5 5.5z" fill="#b0aaa0"/></svg>
<pre id="termtext">Saving to: `/tmp/images/06jul12a_00022gr_00037sq_00025hl_00005en.mrc'

100%[======================================&gt;] 67,109,888  10.9M/s   in 5.8s

2010-10-21 03:29:07 (10.9 MB/s) - `/tmp/images/06jul12a_00022gr_00037sq_00025hl_
00005en.mrc' saved [67109888/67109888]

--2010-10-21 03:29:07--  http://ami.scripps.edu/redmine/attachments/download/111
/06jul12a_00035gr_00063sq_00012hl_00004en.mrc
Reusing existing connection to ami.scripps.edu:80.
HTTP request sent, awaiting response... 200 OK
Length: 67109888 (64M) [application/octet-stream]
Saving to: `/tmp/images/06jul12a_00035gr_00063sq_00012hl_00004en.mrc'

100%[======================================&gt;] 67,109,888  10.9M/s   in 5.9s

2010-10-21 03:29:13 (10.9 MB/s) - `/tmp/images/06jul12a_00035gr_00063sq_00012hl_
00004en.mrc' saved [67109888/67109888]

FINISHED --2010-10-21 03:29:13--
Downloaded: 8 files, 512M in 47s (10.9 MB/s)
========================
Installation Finish.
========================
[root@cb-demo36 Desktop]# Traceback (most recent call last):
  File "/usr/bin/start-leginon.py", line 9, in ?
    from leginon import start
  File "/usr/lib/python2.4/site-packages/leginon/start.py", line 13, in ?
    import leginon.gui.wx.Manager
  File "/usr/lib/python2.4/site-packages/leginon/gui/wx/Manager.py", line 20, in
 ?
    from leginon import manager
  File "/usr/lib/python2.4/site-packages/leginon/manager.py", line 19, in ?
    import launcher
  File "/usr/lib/python2.4/site-packages/leginon/launcher.py", line 14, in ?
    import noderegistry
  File "/usr/lib/python2.4/site-packages/leginon/noderegistry.py", line 33, in ?
    import leginon.allnodes
  File "/usr/lib/python2.4/site-packages/leginon/allnodes.py", line 154, in ?
    from clicktargettransformer import ClickTargetTransformer
  File "/usr/lib/python2.4/site-packages/leginon/clicktargettransformer.py", lin
e 16, in ?
    import caltransformer
  File "/usr/lib/python2.4/site-packages/leginon/caltransformer.py", line 7, in 
?
    dbdk = sinedon.getConnection('leginondata')
  File "/usr/lib/python2.4/site-packages/sinedon/connections.py", line 25, in ge
tConnection
    connections[modulename] = {'config': dbconf, 'connection': DB(**dbconf)}
  File "/usr/lib/python2.4/site-packages/sinedon/dbdatakeeper.py", line 37, in _
_init__
    raise DatabaseError(e.args[-1])
sinedon.dbdatakeeper.DatabaseError: Access denied for user 'root'@'localhost' (u
sing password: NO)
[root@cb-demo36 Desktop]# <span style="background:#000;color:#000;display:inline-block;width:7.526px;height:16px;vertical-align:top;margin-top:1px"></span></pre>

<div id="botpanel" class="abs">
<div class="abs" style="left:0;top:0;width:1680px;height:1px;background:#fdfcfb"></div>
<!-- show desktop -->
<div class="abs" style="left:2px;top:2px;width:21px;height:22px;box-sizing:border-box;border:1px solid #8d8272;border-radius:4px;background:linear-gradient(#f8f6f3,#e9e5de);"></div>
<svg class="abs" style="left:4px;top:5px" width="17" height="17" viewBox="0 0 17 17"><path d="M1.5 6L9 2l6.5 3.5L8 10z" fill="#4a7fc4" stroke="#222" stroke-width="0.9" stroke-linejoin="round"/><path d="M4.5 6.2L9 3.8l3.5 1.9L8 8z" fill="#7fd08a"/><path d="M1.5 8.5L6 7l2 1 2 -1 4 2-6 5z" fill="#c9a25e" stroke="#3a2a10" stroke-width="0.8" stroke-linejoin="round"/><path d="M3.5 10.5l4 -1.5 4.5 2-4 3.5z" fill="#e8e8e8" stroke="#444" stroke-width="0.7" stroke-linejoin="round"/></svg>
<div class="abs" style="left:26px;top:1px;width:6px;height:24px;background:repeating-linear-gradient(#cdbfa9 0,#cdbfa9 1px,#f3f0eb 1px,#f3f0eb 2px);"></div>
<!-- task buttons -->
<div class="task abs" style="left:36px;width:231px"></div>
<svg class="abs" style="left:41.5px;top:4px" width="17" height="17"><use href="#ffx3" width="17" height="17"/></svg>
<span class="ptxt" style="left:64px;top:6.5px">Mozilla Firefox</span>
<div class="task abs" style="left:270px;width:234px;background:linear-gradient(#cfc8bc,#d9d3c9 30%,#dad4ca);box-shadow:inset 0 1px 2px rgba(0,0,0,.25);"></div>
<svg class="abs" style="left:278.5px;top:8px" width="15" height="13"><use href="#termicon" width="15" height="13"/></svg>
<span class="ptxt" style="left:299.5px;top:7.5px;letter-spacing:0.17px">root@cb-demo36:~/Desktop</span>
<div class="task abs" style="left:506px;width:234px"></div>
<svg class="abs" style="left:513px;top:5px" width="17" height="15" viewBox="0 0 17 15"><path d="M1 4.5h3l1.5-2.5h6L13 4.5h3v9H1z" fill="#2a2a2a" stroke="#111" stroke-width="0.8" stroke-linejoin="round"/><circle cx="8.5" cy="8.5" r="3.3" fill="#555" stroke="#999" stroke-width="0.9"/><circle cx="8.5" cy="8.5" r="1.5" fill="#1a1a1a"/><rect x="12.5" y="5.5" width="2" height="1.3" fill="#ccc"/></svg>
<span class="ptxt" style="left:535px;top:6.5px">Starting Take Screenshot</span>
<!-- workspace switcher -->
<div class="abs" style="left:1525px;top:3px;width:32px;height:20px;box-sizing:border-box;border:1px solid #2f62a6;background:#fff;"></div>
<div class="abs" style="left:1527px;top:5px;width:13px;height:16px;background:#4c90d8;overflow:hidden;"><svg style="position:absolute;left:2px;top:-1px" width="18" height="18"><use href="#ffx3" width="18" height="18"/></svg></div>
<div class="abs" style="left:1540px;top:5px;width:15px;height:16px;background:#90c3f6;"></div>
<div class="abs" style="left:1558px;top:3px;width:32px;height:20px;background:#b1a693;"></div>
<div class="abs" style="left:1591px;top:3px;width:32px;height:20px;background:#b1a693;"></div>
<div class="abs" style="left:1624px;top:3px;width:32px;height:20px;background:#b1a693;"></div>
<!-- trash -->
<svg class="abs" style="left:1659px;top:4px" width="21" height="21" viewBox="0 0 21 21"><defs><linearGradient id="trg" x1="0" y1="0" x2="0" y2="1"><stop offset="0" stop-color="#4f8ad6"/><stop offset="1" stop-color="#3972c2"/></linearGradient><linearGradient id="tro" x1="0" y1="0" x2="1" y2="0"><stop offset="0" stop-color="#1c3c70"/><stop offset="0.5" stop-color="#2a5596"/><stop offset="1" stop-color="#3c7cca"/></linearGradient></defs>
<ellipse cx="10.5" cy="18.6" rx="9" ry="1.6" fill="#000" opacity="0.18"/>
<rect x="1.8" y="1.5" width="17.2" height="16.6" rx="2.6" fill="url(#trg)" stroke="#2956a0" stroke-width="1.2"/>
<rect x="3.2" y="2.9" width="14.4" height="13.8" rx="1.8" fill="none" stroke="#7aaae2" stroke-width="0.9" opacity="0.9"/>
<rect x="3.7" y="3.3" width="13.4" height="2.6" rx="1.2" fill="url(#tro)"/>
</svg>
</div>

</div>
</body>
</html>
